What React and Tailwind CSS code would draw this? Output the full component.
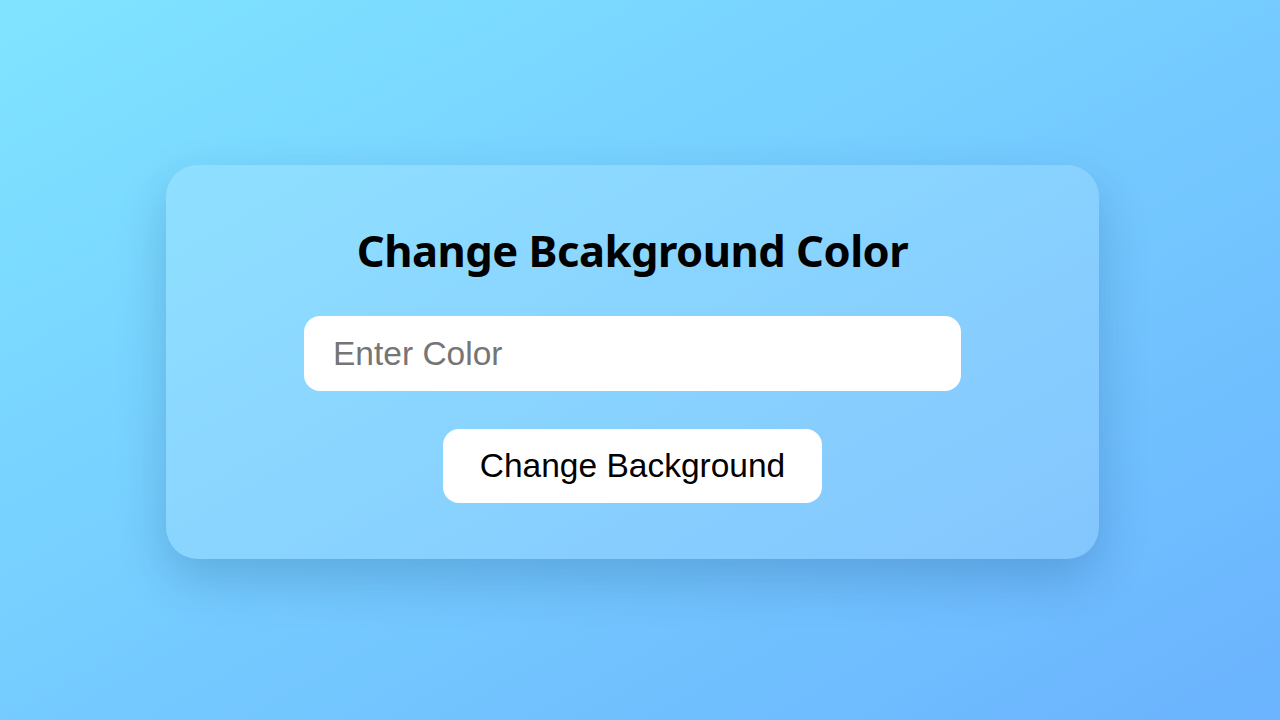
import React from 'react';

const App = () => {
  return (
    <div className="w-full h-[720px] flex items-center justify-center bg-gradient-to-br from-[#80e4ff] to-[#6bb3fe] font-['Liberation_Sans',Arial,sans-serif]">
      {/* Card */}
      <div className="w-[933px] h-[394px] mt-[4px] mr-[15px] rounded-[32px] bg-white/15 shadow-[0_20px_50px_rgba(0,40,90,0.2)] flex flex-col items-center pt-[59px]">
        <h1 className="text-[43.5px] leading-[52px] font-bold text-black font-['Noto_Sans','Open_Sans',sans-serif] tracking-[-0.5px]">
          Change Bcakground Color
        </h1>
        <input
          type="text"
          placeholder="Enter Color"
          className="mt-[40px] w-[657px] h-[75px] rounded-[16px] bg-white px-[29px] text-[33.5px] text-black placeholder:text-[#757575] outline-none"
        />
        <button className="mt-[38px] w-[379px] h-[74px] rounded-[16px] bg-white text-[33.5px] text-black">
          Change Background
        </button>
      </div>
    </div>
  );
};

export default App;
